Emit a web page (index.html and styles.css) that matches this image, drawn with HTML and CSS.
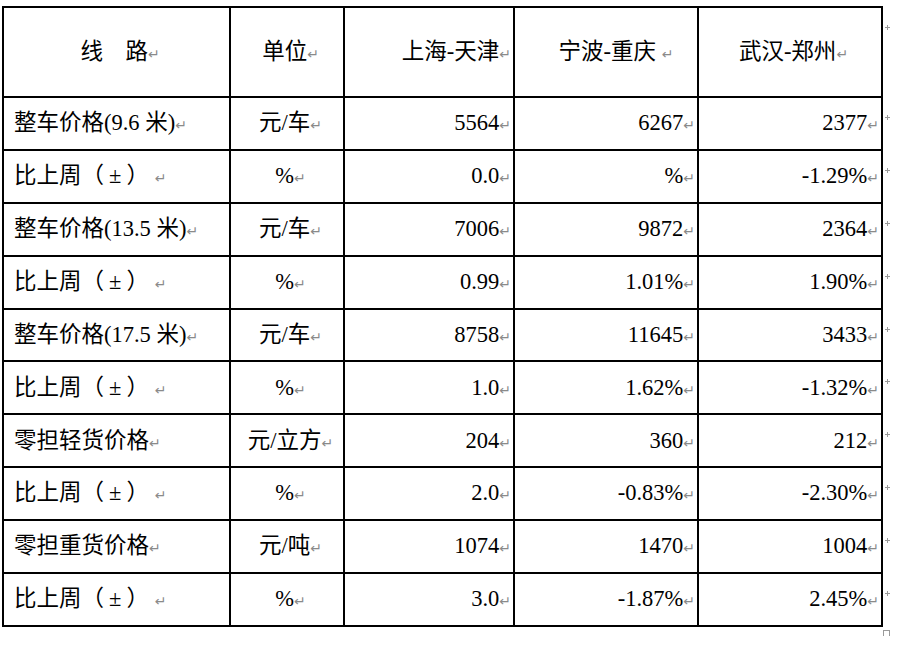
FILE: index.html
```html
<!DOCTYPE html>
<html lang="zh">
<head>
<meta charset="utf-8">
<title>线路价格</title>
<link rel="stylesheet" href="styles.css">
</head>
<body>
<div class="page">
  <table class="grid">
    <colgroup>
      <col class="c1"><col class="c2"><col class="c3"><col class="c4"><col class="c5"><col class="c6">
    </colgroup>
    <tr class="head">
      <td class="ctr rm">线　路</td>
      <td class="ctr rm">单位</td>
      <td class="rt rm">上海-天津</td>
      <td class="ctr rm shift">宁波-重庆&nbsp;</td>
      <td class="ctr rm">武汉-郑州</td>
      <td class="end"><span class="mk"></span></td>
    </tr>
    <tr>
      <td class="lt rm">整车价格(9.6 米)</td>
      <td class="ctr rm">元/车</td>
      <td class="rt rm">5564</td>
      <td class="rt rm">6267</td>
      <td class="rt rm">2377</td>
      <td class="end"><span class="mk"></span></td>
    </tr>
    <tr>
      <td class="lt rm">比上周（<span class="pm">±</span>）&nbsp;</td>
      <td class="ctr rm">%</td>
      <td class="rt rm">0.0</td>
      <td class="rt rm">%</td>
      <td class="rt rm">-1.29%</td>
      <td class="end"><span class="mk"></span></td>
    </tr>
    <tr>
      <td class="lt rm">整车价格(13.5 米)</td>
      <td class="ctr rm">元/车</td>
      <td class="rt rm">7006</td>
      <td class="rt rm">9872</td>
      <td class="rt rm">2364</td>
      <td class="end"><span class="mk"></span></td>
    </tr>
    <tr>
      <td class="lt rm">比上周（<span class="pm">±</span>）&nbsp;</td>
      <td class="ctr rm">%</td>
      <td class="rt rm">0.99</td>
      <td class="rt rm">1.01%</td>
      <td class="rt rm">1.90%</td>
      <td class="end"><span class="mk"></span></td>
    </tr>
    <tr>
      <td class="lt rm">整车价格(17.5 米)</td>
      <td class="ctr rm">元/车</td>
      <td class="rt rm">8758</td>
      <td class="rt rm">11645</td>
      <td class="rt rm">3433</td>
      <td class="end"><span class="mk"></span></td>
    </tr>
    <tr>
      <td class="lt rm">比上周（<span class="pm">±</span>）&nbsp;</td>
      <td class="ctr rm">%</td>
      <td class="rt rm">1.0</td>
      <td class="rt rm">1.62%</td>
      <td class="rt rm">-1.32%</td>
      <td class="end"><span class="mk"></span></td>
    </tr>
    <tr>
      <td class="lt rm">零担轻货价格</td>
      <td class="ctr rm">元/立方</td>
      <td class="rt rm">204</td>
      <td class="rt rm">360</td>
      <td class="rt rm">212</td>
      <td class="end"><span class="mk"></span></td>
    </tr>
    <tr>
      <td class="lt rm">比上周（<span class="pm">±</span>）&nbsp;</td>
      <td class="ctr rm">%</td>
      <td class="rt rm">2.0</td>
      <td class="rt rm">-0.83%</td>
      <td class="rt rm">-2.30%</td>
      <td class="end"><span class="mk"></span></td>
    </tr>
    <tr>
      <td class="lt rm">零担重货价格</td>
      <td class="ctr rm">元/吨</td>
      <td class="rt rm">1074</td>
      <td class="rt rm">1470</td>
      <td class="rt rm">1004</td>
      <td class="end"><span class="mk"></span></td>
    </tr>
    <tr>
      <td class="lt rm">比上周（<span class="pm">±</span>）&nbsp;</td>
      <td class="ctr rm">%</td>
      <td class="rt rm">3.0</td>
      <td class="rt rm">-1.87%</td>
      <td class="rt rm">2.45%</td>
      <td class="end"><span class="mk"></span></td>
    </tr>
  </table>
  <div class="corner"></div>
</div>
</body>
</html>
```

FILE: styles.css
```css
html, body {
  margin: 0;
  padding: 0;
  background: #ffffff;
}

.page {
  padding: 6px 0 0 2px;
}

.grid {
  border-collapse: collapse;
  table-layout: fixed;
  width: 893px;
  font-family: "Liberation Serif", "Noto Sans CJK SC", serif;
  font-size: 22.5px;
  color: #000;
  line-height: 1;
}

.c1 { width: 227px; }
.c2 { width: 114px; }
.c3 { width: 170px; }
.c4 { width: 184px; }
.c5 { width: 184px; }
.c6 { width: 14px; }

.grid td {
  border: 2px solid #000;
  padding: 0;
  vertical-align: middle;
  white-space: nowrap;
}

.grid tr {
  height: 52.9px;
}

.grid tr.head {
  height: 90px;
}

.grid td.end {
  border: none;
  vertical-align: top;
  padding: 18px 0 0 2px;
}

.lt {
  text-align: left;
  padding-left: 10px !important;
}

.ctr {
  text-align: center;
  padding-left: 7px !important;
}

.ctr.shift {
  padding-left: 20px !important;
}

.rt {
  text-align: right;
  padding-right: 2px !important;
}

.rm::after {
  content: "\21B5";
  font-family: "DejaVu Sans", sans-serif;
  font-size: 14px;
  color: #8a8a8a;
  margin-left: 0;
}

.pm {
  display: inline-block;
  width: 1em;
  text-align: center;
}

.mk {
  display: block;
  position: relative;
  width: 5px;
  height: 5px;
}

.mk::before,
.mk::after {
  content: "";
  position: absolute;
  background: #9a9a9a;
}

.mk::before {
  left: 2px;
  top: 0;
  width: 1px;
  height: 5px;
}

.mk::after {
  left: 0;
  top: 2px;
  width: 5px;
  height: 1px;
}

.corner {
  margin: 3px 0 0 881px;
  width: 5px;
  height: 5px;
  border: 1px solid #9a9a9a;
  border-bottom: none;
}
```
